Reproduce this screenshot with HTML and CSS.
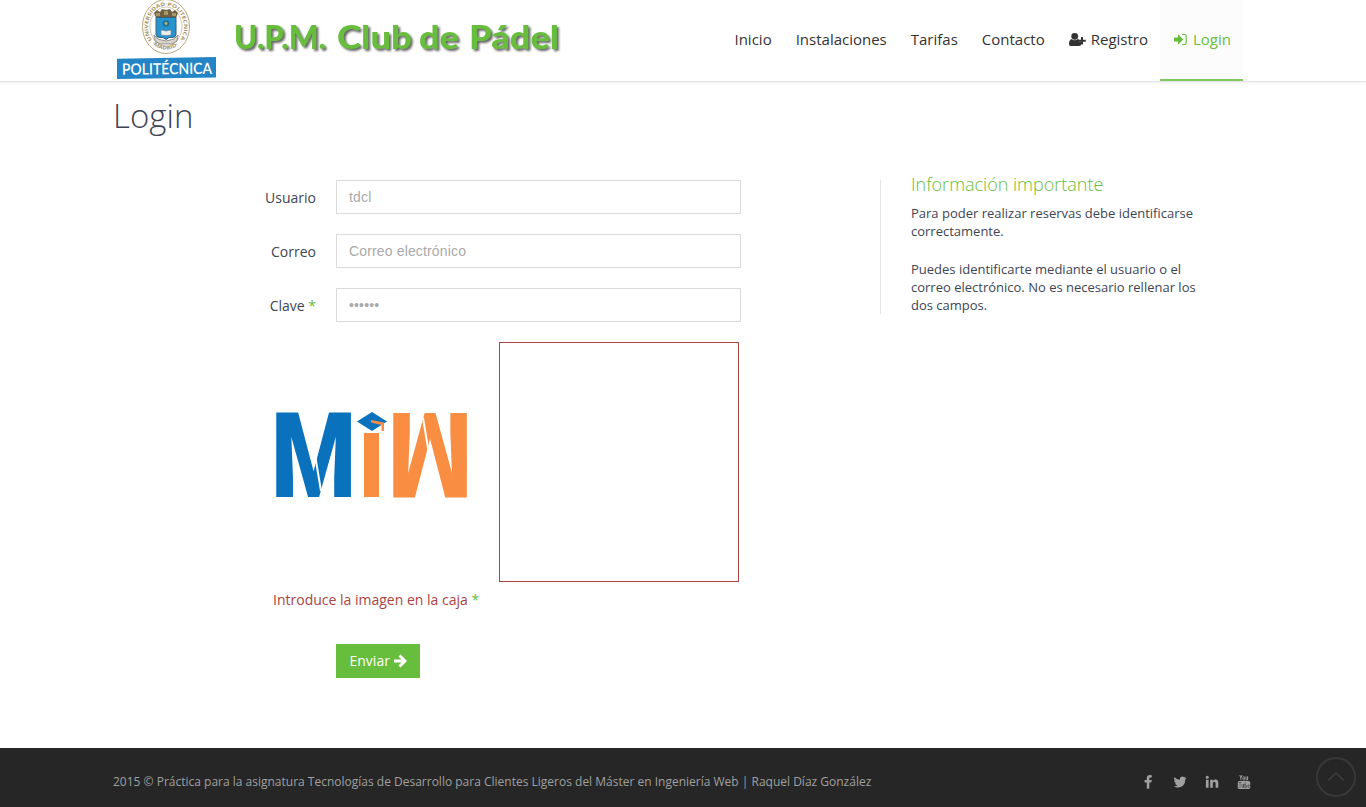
FILE: index.html
```html
<!DOCTYPE html>
<html lang="es">
<head>
<meta charset="utf-8">
<title>U.P.M. Club de Pádel - Login</title>
<link rel="stylesheet" href="styles.css">
</head>
<body>
<header class="header">
  <div class="container header-inner">
    <a class="brand">
      <svg class="crest" width="102" height="81" viewBox="0 0 102 81">
        <defs><path id="ring" d="M39 40A18 21 0 1 1 67 40"/><path id="ring-low" d="M39 43.500A21 24 0 0 0 67 43.500"/></defs>
        <ellipse cx="53" cy="26.500" rx="23.500" ry="27" fill="#fff" stroke="#b9a781" stroke-width="1"/>
        <ellipse cx="53" cy="26.500" rx="16" ry="19.500" fill="#fff" stroke="#c8b998" stroke-width=".8"/>
        <text class="ring-text"><textPath href="#ring" textLength="88" lengthAdjust="spacingAndGlyphs">UNIVERSIDAD·POLITECNICA</textPath></text>
        <text class="ring-text"><textPath href="#ring-low" textLength="29" lengthAdjust="spacingAndGlyphs">·MADRID·</textPath></text>
        <path d="M43 18l-2-5 3-3 3 2 2-3 4 1 4-1 2 3 3-2 3 3-2 5z" fill="#705f42"/>
        <path d="M43 13h4v3h-4zM51 11h4v4h-4zM59 13h4v3h-4z" fill="#a99567"/>
        <path d="M43 17.500h20v17q0 3-4 3h-3l-3 2-3-2h-3q-4 0-4-3z" fill="#2594cf" stroke="#39627a"/>
        <circle cx="53" cy="23.500" r="3.300" fill="#227198"/><circle cx="53" cy="23.500" r="1.400" fill="#c2b56f"/>
        <path d="M48 30l5 1 5-1v5l-5 .6-5-.6z" fill="#eee" stroke="#77818a" stroke-width=".6"/>
        <path d="M41 35l4 4 8 2 8-2 4-4-1 6-5 3h-12l-5-3z" fill="#d8d4cb" stroke="#625c50" stroke-width=".6"/>
        <path d="M4 58.700L103 57v20.500L4 79z" fill="#2384c6"/>
        <text class="crest-name" x="9" y="74.300" textLength="90" lengthAdjust="spacingAndGlyphs" transform="rotate(-.6 53 69)">POLITÉCNICA</text>
      </svg>
      <svg class="brand-name" width="340" height="60" viewBox="0 0 340 60"><text y="48.500"><tspan x="6" textLength="92" lengthAdjust="spacingAndGlyphs">U.P.M.</tspan> <tspan x="109" textLength="75" lengthAdjust="spacingAndGlyphs">Club</tspan> <tspan x="191" textLength="40" lengthAdjust="spacingAndGlyphs">de</tspan> <tspan x="241" textLength="90" lengthAdjust="spacingAndGlyphs">Pádel</tspan></text></svg>
    </a>
    <nav class="nav">
      <a>Inicio</a><a>Instalaciones</a><a>Tarifas</a><a>Contacto</a>
      <a><svg class="user-icon" width="17" height="14" viewBox="0 0 17 14"><circle cx="5.700" cy="4.300" r="3.400"/><path d="M2.500 7Q5.500 9.500 8.800 7L10 7.500v2.300h2V13q-.5.900-2 .9H1.600Q0 13.900 0 12 0 8 2.500 7z"/><path d="M12 5h2v2.800h2.800v2H14v2.700h-2V9.800H9.500v-2H12z"/></svg>Registro</a>
      <a class="active"><svg class="login-icon" width="14" height="14" viewBox="0 0 14 14"><path d="M0 5.500h4V2.300L9.300 7.500 4 12.700V9.500H0z"/><path d="M8 2.500h2.500q1.700 0 1.700 1.700v6.600q0 1.700-1.700 1.700H8" fill="none" stroke="#67bd3c" stroke-width="1.100"/></svg>Login</a>
    </nav>
  </div>
</header>
<main class="container main">
  <h1>Login</h1>
  <div class="columns">
    <form class="form">
      <div class="row"><label for="user">Usuario</label><input id="user" type="text" placeholder="tdcl"></div>
      <div class="row"><label for="mail">Correo</label><input id="mail" type="text" placeholder="Correo electrónico"></div>
      <div class="row"><label for="pass">Clave <b>*</b></label><input id="pass" type="password" placeholder="••••••"></div>
      <div class="captcha">
        <svg class="miw" width="194" height="88" viewBox="0 0 194 88" role="img" aria-label="MiW">
          <text class="miw-m" x="-4" y="86" textLength="85.300" lengthAdjust="spacingAndGlyphs">M</text>
          <path class="slit" d="M39.500 41L46 80"/>
          <path d="M82 10.500L97 1l15 9.500L97 20z" fill="#0a72bd"/>
          <path d="M96 9l13 2.500V20h-2.500v-6L96 11.500z" fill="#f98d42"/>
          <rect x="89" y="22" width="15" height="64" fill="#f98d42"/>
          <text class="miw-w" x="-197" y="-1.500" textLength="84" lengthAdjust="spacingAndGlyphs" transform="rotate(180)">M</text>
          <path class="slit" d="M148 7l6.500 39"/>
        </svg>
        <div class="dropbox"></div>
      </div>
      <p class="hint">Introduce la imagen en la caja <b>*</b></p>
      <button class="submit" type="button">Enviar <svg width="13" height="14" viewBox="0 0 13 14"><path d="M0 7h10M5.500 1.500L11 7l-5.500 5.500" fill="none" stroke="#fff" stroke-width="2.900"/></svg></button>
    </form>
    <aside class="info">
      <h2>Información importante</h2>
      <p>Para poder realizar reservas debe identificarse correctamente.</p>
      <p>Puedes identificarte mediante el usuario o el correo electrónico. No es necesario rellenar los dos campos.</p>
    </aside>
  </div>
</main>
<footer class="footer">
  <div class="container footer-inner">
    <span>2015 © Práctica para la asignatura Tecnologías de Desarrollo para Clientes Ligeros del Máster en Ingeniería Web | Raquel Díaz González</span>
    <div class="social">
      <svg viewBox="0 0 14 14"><path d="M10.800.2v2.200H9.500q-1.200 0-1.200 1.100V5h2.400l-.3 2.400H8.300v6.400H5.800V7.400H3.600V5h2.200V3.200Q5.800 0 9 0z"/></svg>
      <svg viewBox="0 0 14 14"><path d="M13.600 3q-.6.800-1.400 1.400.2 4.500-3.400 7-4.200 2.300-8.300 0 2.400.1 4.100-1.200-2-.2-2.600-2h1.200Q1 7.500 1 5.300l1.200.3Q.2 3.900 1.300 1.900 3.500 4.600 6.900 4.700 6.500 2.300 8.300 1.700q1.600-.5 2.800.6l1.700-.6-1.100 1.500z"/></svg>
      <svg viewBox="0 0 14 14"><circle cx="2.200" cy="2.300" r="1.500"/><path d="M.9 4.800h2.700v8H.9zM5.200 4.800h2.600v1.100Q9 4.500 10.600 4.600q2.700.2 2.700 3.600v4.600h-2.700V8.500q0-1.700-1.300-1.700-1.500 0-1.500 1.700v4.300H5.200z"/></svg>
      <svg viewBox="0 0 14 14"><path d="M2.800 0l1.100 3v2.200M5 0L3.900 3M6 2.400q0-.8.800-.8t.8.800v2q0 .8-.8.800T6 4.400zM9 1.500v3q0 .7.800.5l.8-.7V1.500v3.700" fill="none" stroke="#a0a0a0" stroke-width=".9"/><rect x=".8" y="6" width="12.400" height="8" rx="1.500"/><path d="M1.800 7.500h2.500M3 7.500V13M5 9v3q.7 1.500 1.700 0V9v4M8.100 7.200V13h.9q.6-.4.500-1.800T8.100 9.300M12.300 12q-.8 1.400-1.400.3v-2q.7-1.500 1.400 0v.8H11" fill="none" stroke="#262626" stroke-width=".5"/></svg>
    </div>
  </div>
  <svg class="to-top" width="42" height="42" viewBox="0 0 42 42"><circle cx="21" cy="21" r="19"/><path d="M13 24.500l8-7.500 8 7.500"/></svg>
</footer>
</body>
</html>
```
FILE: styles.css
```css
* { box-sizing: border-box; }
body { margin: 0; min-height: 807px; display: flex; flex-direction: column; background: #fff; color: #3e4555; font: 14px/20px "Open Sans", sans-serif; }
.container { width: 1140px; margin: 0 auto; }
.header { height: 82px; border-bottom: 1px solid #e6e6e6; box-shadow: 0 1px 2px #eee; }
.header-inner { display: flex; justify-content: space-between; height: 81px; padding-right: 10px; }
.brand { display: flex; }
.crest { overflow: visible; }
.ring-text { font: 700 5px "Open Sans", sans-serif; fill: #a59268; }
.crest-name { font: 600 15.500px Lato, sans-serif; fill: #fff; }
.brand-name { margin-left: 13px; overflow: visible; }
.brand-name text { font: 900 32px Lato, sans-serif; fill: #67bd3c; filter: drop-shadow(2px 2px 1px #666); }
.nav { display: flex; }
.nav a { display: flex; align-items: center; padding: 0 12px 4px; height: 81px; font-size: 15px; color: #333; white-space: nowrap; }
.nav .active { width: 83px; padding: 0 12px 2px 14px; color: #67bd3c; background: #fcfcfc; border-bottom: 2px solid #7dc95b; }
.nav svg { fill: currentColor; flex: none; margin-right: 5px; }
.nav .active svg { margin-right: 5px; }
.main { flex: 1; padding: 14px 0 0; }
h1 { margin: 0; font-size: 33px; line-height: 39px; font-weight: 300; }
.columns { display: flex; margin-top: 45px; }
.form { width: 628px; }
.row { display: flex; align-items: center; margin-bottom: 20px; height: 34px; }
.row label { width: 203px; margin-right: 20px; padding-top: 2px; text-align: right; }
b { color: #67bd3c; font-weight: 400; }
.row input { width: 405px; height: 34px; padding: 6px 12px; border: 1px solid #dbdbdb; outline: 0; font: 14px "Liberation Sans", Arial, sans-serif; letter-spacing: .15px; }
.row input::placeholder { color: #aaa; opacity: 1; }
.captcha { display: flex; padding-left: 162px; height: 240px; }
.miw { margin: 69px 30px 0 0; overflow: visible; }
.miw text { font: 900 119.500px Roboto, sans-serif; }
.miw-m { fill: #0a72bd; }
.miw-w { fill: #f98d42; }
.slit { stroke: #fff; stroke-width: 2; }
.dropbox { width: 240px; height: 240px; border: 1px solid #a94442; }
.hint { margin: 8px 0 34px 160px; color: #a94442; }
.submit { display: flex; align-items: center; gap: 4px; width: 84px; height: 34px; margin-left: 223px; padding: 0 0 1px 13.500px; border: 0; background: #67bd3c; color: #fff; font: 14px "Open Sans", sans-serif; }
.submit svg { margin: 1px 0 0; }
.info { width: 330px; height: 134px; margin-left: 139px; padding-left: 30px; border-left: 1px solid #e5e5e5; font-size: 13px; line-height: 18px; }
.info h2 { margin: -6px 0 9px; color: #67bd3c; font-size: 18px; line-height: 21px; font-weight: 300; }
.info p { width: 290px; margin: 0 0 20px; }
.footer { position: relative; height: 59px; background: #262626; color: #a0a0a0; font-size: 12px; }
.footer-inner { display: flex; justify-content: space-between; align-items: center; height: 59px; padding-top: 8px; }
.social { display: flex; gap: 18px; padding-right: 2px; }
.social svg { width: 14px; height: 14px; fill: #a0a0a0; }
.to-top { position: absolute; right: 9px; top: 8px; fill: none; stroke: #383838; stroke-width: 2; }
```
